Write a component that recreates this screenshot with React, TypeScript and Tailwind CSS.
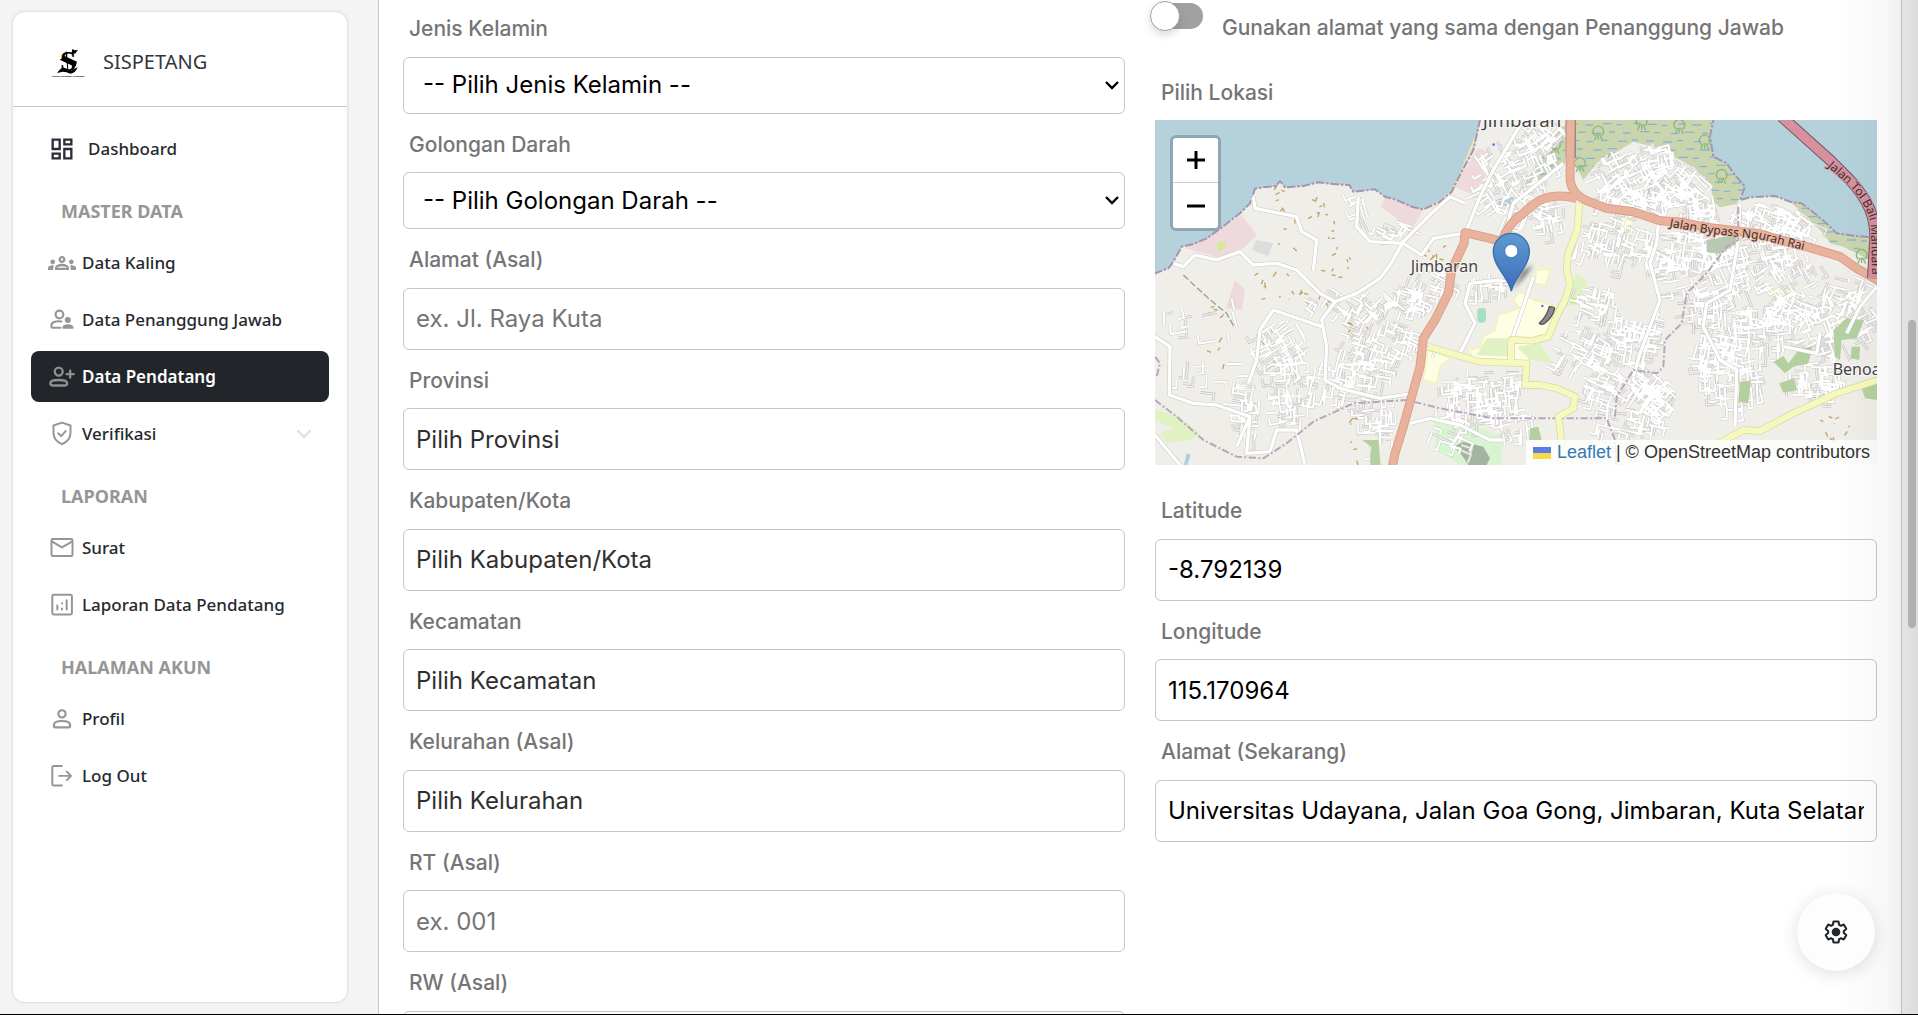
import React, { useId } from "react";

/* ---------- icons ---------- */

type IconProps = { children: React.ReactNode; className?: string; width?: number };

function LineIcon({ children, className = "text-[#969696]", width = 1.7 }: IconProps) {
  return (
    <svg
      viewBox="0 0 24 24"
      className={`size-7 shrink-0 ${className}`}
      fill="none"
      stroke="currentColor"
      strokeWidth={width}
      strokeLinecap="round"
      strokeLinejoin="round"
      aria-hidden="true"
    >
      {children}
    </svg>
  );
}

const DashboardIcon = () => (
  <svg viewBox="0 0 24 24" className="size-7 shrink-0 text-[#2b2d38]" fill="currentColor" aria-hidden="true">
    <path d="M19 5v2h-4V5h4M9 5v6H5V5h4m10 8v6h-4v-6h4M9 17v2H5v-2h4M21 3h-8v6h8V3zM11 3H3v10h8V3zm10 8h-8v10h8V11zm-10 4H3v6h8v-6z" />
  </svg>
);

const GroupsIcon = () => (
  <svg viewBox="0 0 24 24" className="size-7 shrink-0 text-[#969696]" fill="currentColor" aria-hidden="true">
    <path d="M4 13c1.1 0 2-.9 2-2s-.9-2-2-2-2 .9-2 2 .9 2 2 2zm1.13 1.1c-.37-.06-.74-.1-1.13-.1-.99 0-1.93.21-2.78.58A2.01 2.01 0 0 0 0 16.43V18h4.5v-1.61c0-.83.23-1.61.63-2.29zM20 13c1.1 0 2-.9 2-2s-.9-2-2-2-2 .9-2 2 .9 2 2 2zm4 3.43c0-.81-.48-1.53-1.22-1.85a6.95 6.95 0 0 0-2.78-.58c-.39 0-.76.04-1.13.1.4.68.63 1.46.63 2.29V18H24v-1.57zm-7.76-2.78A10.09 10.09 0 0 0 12 12.75c-1.63 0-3.07.39-4.24.9A2.99 2.99 0 0 0 6 16.39V18h12v-1.61c0-1.18-.68-2.26-1.76-2.74zM8.07 16c.09-.23.13-.39.91-.69.97-.38 1.99-.56 3.02-.56s2.05.18 3.02.56c.77.3.81.46.91.69H8.07zM12 8c.55 0 1 .45 1 1s-.45 1-1 1-1-.45-1-1 .45-1 1-1m0-2c-1.66 0-3 1.34-3 3s1.34 3 3 3 3-1.34 3-3-1.34-3-3-3z" />
  </svg>
);

const SupervisorIcon = () => (
  <LineIcon width={1.8}>
    <circle cx="9.8" cy="7.3" r="3.3" />
    <path d="M11.5 13.3c-5-.9-8.600 1-8.600 3v1.200c0 .9.500 1.200 1.200 1.200h6.500" />
    <circle cx="17" cy="12" r="2.6" fill="currentColor" stroke="none" />
    <path d="M12.4 19.5v-1.3c0-3.4 9.4-3.4 9.4 0v1.3z" fill="currentColor" stroke="none" />
  </LineIcon>
);

const PersonAddIcon = () => (
  <LineIcon width={2} className="text-[#8f8f8f]">
    <circle cx="9.2" cy="7.3" r="3.4" />
    <path d="M2 17.4c0-3.800 14.400-3.800 14.400 0 0 1.600-1 1.900-2.200 1.900H4.200C3 19.300 2 19 2 17.400zM19 6.500v6M16 9.500h6" />
  </LineIcon>
);

const ShieldIcon = () => (
  <LineIcon>
    <path d="M12 2.200l7.300 2.500v6c0 5-3 8.200-7.300 10-4.300-1.800-7.300-5-7.300-10v-6zM8.800 11.400l2.400 2.400 4-4.300" />
  </LineIcon>
);

const MailIcon = () => (
  <LineIcon>
    <rect x="3" y="4.3" width="18" height="14.6" rx="1.2" />
    <path d="M3.500 6.500l8.500 5 8.500-5" />
  </LineIcon>
);

const ChartIcon = () => (
  <LineIcon>
    <rect x="3.7" y="3.3" width="16.8" height="16.8" rx="1.2" />
    <path d="M8 12.500v3.300M12 15v.8M12 10.500v.2M16 8v7.800" />
  </LineIcon>
);

const PersonIcon = () => (
  <LineIcon width={1.9}>
    <circle cx="12" cy="7.6" r="3.1" />
    <path d="M5.100 17c0-4.400 13.800-4.400 13.800 0v.9c0 .9-.4 1.200-1.200 1.200H6.300c-.8 0-1.200-.3-1.200-1.200z" />
  </LineIcon>
);

const LogoutIcon = () => (
  <LineIcon>
    <path d="M11.800 3.500H5c-.9 0-1.300.4-1.300 1.300v14c0 .9.400 1.300 1.300 1.300h6.800M9.500 11.900h10M16.200 8.300l3.500 3.600-3.500 3.600" />
  </LineIcon>
);

const GearIcon = () => (
  <svg viewBox="0 0 24 24" className="size-7" fill="none" stroke="#22262b" strokeWidth="2" strokeLinejoin="round" aria-hidden="true">
    <g transform="translate(1.200 1.200) scale(.9)">
      <path d="M19.43 12.98c.04-.32.07-.64.07-.98 0-.34-.03-.66-.07-.98l2.11-1.65c.19-.15.24-.42.12-.64l-2-3.46a.5.5 0 0 0-.61-.22l-2.49 1c-.52-.4-1.08-.73-1.69-.98l-.38-2.65A.488.488 0 0 0 14 2h-4c-.25 0-.46.18-.49.42l-.38 2.65c-.61.25-1.17.59-1.69.98l-2.49-1a.566.566 0 0 0-.18-.03c-.17 0-.34.09-.43.25l-2 3.46c-.13.22-.07.49.12.64l2.11 1.65c-.04.32-.07.65-.07.98 0 .33.03.66.07.98l-2.11 1.65c-.19.15-.24.42-.12.64l2 3.46a.5.5 0 0 0 .61.22l2.49-1c.52.4 1.08.73 1.69.98l.38 2.65c.03.24.24.42.49.42h4c.25 0 .46-.18.49-.42l.38-2.65c.61-.25 1.17-.59 1.69-.98l2.49 1c.06.02.12.03.18.03.17 0 .34-.09.43-.25l2-3.46c.12-.22.07-.49-.12-.64l-2.11-1.65z" />
    </g>
    <circle cx="12" cy="12" r="3.7" fill="#22262b" stroke="none" />
  </svg>
);

const Logo = () => (
  <svg viewBox="0 0 114 105" className="h-[35px] w-[38px] shrink-0" aria-hidden="true">
    <text x="33" y="78" fontFamily="Liberation Serif, serif" fontWeight="700" fontSize="88">S</text>
    <path d="M70 12q10 6 18 2l-10 12-10-2zM32 44l16-10 36 16-4 14-14-4zM24 84q14-20 26-14l16 8 20-12q-6 18-22 20-12-6-22-6zM54 20l4 54h-3l-5-54z" />
    <text x="57" y="97" textAnchor="middle" fontFamily="Liberation Sans, sans-serif" fontWeight="700" fontSize="7">
      Sistem Pendataan Pendatang
    </text>
  </svg>
);

/* ---------- sidebar ---------- */

type Item = { label: string; icon: React.ReactNode; active?: boolean; expandable?: boolean };

const sections: { title: string; items: Item[] }[] = [
  {
    title: "MASTER DATA",
    items: [
      { label: "Data Kaling", icon: <GroupsIcon /> },
      { label: "Data Penanggung Jawab", icon: <SupervisorIcon /> },
      { label: "Data Pendatang", icon: <PersonAddIcon />, active: true },
      { label: "Verifikasi", icon: <ShieldIcon />, expandable: true },
    ],
  },
  {
    title: "LAPORAN",
    items: [
      { label: "Surat", icon: <MailIcon /> },
      { label: "Laporan Data Pendatang", icon: <ChartIcon /> },
    ],
  },
  {
    title: "HALAMAN AKUN",
    items: [
      { label: "Profil", icon: <PersonIcon /> },
      { label: "Log Out", icon: <LogoutIcon /> },
    ],
  },
];

function NavItem({ item }: { item: Item }) {
  const tone = item.active ? "bg-[#22262b] text-white font-semibold" : "text-[#26292e] font-medium";
  return (
    <a href="#" className={`flex h-[51px] items-center gap-[6px] rounded-lg px-[17px] text-[17px] ${tone}`}>
      {item.icon}
      <span className="flex-1 whitespace-nowrap">{item.label}</span>
      {item.expandable && (
        <svg viewBox="0 0 16 16" className="size-4" fill="none" stroke="#dde0e6" strokeWidth="2.4" strokeLinecap="round" aria-hidden="true">
          <path d="M2 5l6 6 6-6" />
        </svg>
      )}
    </a>
  );
}

function Sidebar() {
  return (
    <aside className="my-3 ml-[13px] mr-[31px] w-[334px] shrink-0 overflow-hidden rounded-xl bg-white font-['Noto_Sans','Open_Sans',sans-serif] shadow-[0_0_3px_rgba(0,0,0,0.2)]">
      <div className="flex h-[95px] items-center gap-4 border-b border-[#c6c7c8] px-[36px] pt-[6px]">
        <Logo />
        <span className="text-[20px] text-[#32363c]">SISPETANG</span>
      </div>
      <nav className="px-[18px] pt-4">
        <a href="#" className="flex h-[51px] items-center gap-3 rounded-lg px-[17px] text-[17px] font-medium text-[#26292e]">
          <DashboardIcon />
          Dashboard
        </a>
        {sections.map((s) => (
          <div key={s.title}>
            <h2 className="pt-[25px] pb-[13px] pl-[30px] text-[18px] leading-[25px] font-bold text-[#969696]">{s.title}</h2>
            <div className="flex flex-col gap-[6px]">
              {s.items.map((i) => (
                <NavItem key={i.label} item={i} />
              ))}
            </div>
          </div>
        ))}
      </nav>
    </aside>
  );
}

/* ---------- form fields ---------- */

const labelText = "text-[21px] leading-normal font-medium text-[#757575]";

function SelectField({ label, option }: { label: string; option: string }) {
  const id = useId();
  return (
    <div className="flex flex-col gap-3">
      <label htmlFor={id} className={`pl-[6px] ${labelText}`}>{label}</label>
      <div className="relative">
        <select id={id} className="h-[57px] w-full appearance-none rounded-md border border-[#c6c6c6] bg-white px-[19px] text-2xl text-black">
          <option>{option}</option>
        </select>
        <svg
          viewBox="0 0 14 14"
          className="pointer-events-none absolute top-[21px] right-[6px] size-[14px]"
          fill="none"
          stroke="#000000"
          strokeWidth="2.4"
          aria-hidden="true"
        >
          <path d="M1 4l6 6 6-6" />
        </svg>
      </div>
    </div>
  );
}

type TextFieldProps = { label: string; placeholder?: string; value?: string; dark?: boolean };

function TextField({ label, placeholder, value, dark }: TextFieldProps) {
  const id = useId();
  return (
    <div className="flex flex-col gap-3">
      <label htmlFor={id} className={`pl-[6px] ${labelText}`}>{label}</label>
      <input
        id={id}
        type="text"
        placeholder={placeholder}
        defaultValue={value}
        className={`h-[62px] w-full rounded-md border border-[#c6c6c6] bg-white px-3 text-2xl text-black ${dark ? "placeholder:text-[#303030]" : "placeholder:text-[#757575]"}`}
      />
    </div>
  );
}

/* ---------- map ---------- */

function makeRandom(seed: number) {
  let s = seed;
  return () => {
    s = (s * 16807) % 2147483647;
    return s / 2147483647;
  };
}

/* Each district: centre x, centre y, radius x, radius y, street angle, street count */
const districts: [number, number, number, number, number, number][] = [
  [440, 730, 80, 70, 60, 60],
  [460, 870, 70, 110, 85, 70],
  [620, 840, 130, 70, 10, 90],
  [720, 720, 130, 60, 20, 80],
  [700, 610, 60, 40, 40, 26],
  [800, 600, 70, 40, 20, 50],
  [330, 930, 30, 90, 95, 40],
  [1010, 900, 90, 80, 85, 90],
  [1020, 850, 130, 50, 0, 60],
  [1040, 550, 60, 30, 0, 36],
  [850, 540, 70, 50, 25, 30],
  [660, 330, 20, 50, 70, 12],
  [760, 390, 60, 30, 25, 22],
  [1070, 230, 60, 110, 60, 50],
  [1180, 180, 70, 90, 65, 80],
  [1220, 100, 50, 40, 45, 40],
  [1130, 310, 80, 50, 20, 34],
  [1230, 330, 50, 60, 80, 26],
  [1470, 220, 110, 70, 60, 110],
  [1600, 240, 80, 60, 40, 90],
  [1560, 160, 50, 30, 80, 36],
  [1470, 300, 110, 40, 15, 60],
  [1420, 420, 120, 70, 15, 80],
  [1640, 310, 90, 50, 80, 50],
  [1620, 440, 120, 50, 10, 90],
  [1700, 360, 40, 60, 85, 40],
  [1860, 350, 100, 40, 20, 80],
  [1960, 370, 60, 40, 30, 40],
  [1860, 450, 120, 50, 75, 60],
  [1960, 520, 100, 60, 60, 50],
  [1760, 510, 70, 110, 70, 90],
  [1500, 700, 80, 100, 100, 120],
  [1400, 600, 130, 50, 15, 70],
  [1340, 740, 100, 60, 25, 70],
  [1560, 900, 50, 70, 130, 80],
  [1510, 860, 60, 40, 130, 50],
  [1740, 740, 70, 70, 10, 80],
  [1860, 680, 110, 70, 0, 100],
  [1780, 840, 100, 90, 85, 90],
  [1960, 620, 90, 50, 25, 60],
  [2020, 840, 90, 50, 0, 80],
  [2050, 680, 80, 90, 70, 60],
  [2160, 640, 50, 70, 60, 40],
  [1450, 960, 110, 50, 10, 50],
  [1380, 860, 60, 50, 20, 40],
  [1120, 950, 70, 60, 80, 40],
  [720, 960, 60, 80, 90, 40],
  [180, 640, 110, 100, 80, 12],
  [200, 820, 110, 60, 0, 12],
  [560, 620, 120, 60, 30, 30],
  [930, 1000, 60, 50, 20, 20],
  [1700, 640, 60, 60, 85, 40],
  [2120, 570, 70, 50, 20, 30],
  [1600, 540, 70, 60, 80, 30],
];

function buildStreets() {
  const rnd = makeRandom(4711);
  let major = "";
  let minor = "";
  for (const [cx, cy, rx, ry, angle, count] of districts) {
    for (let i = 0; i < count; i++) {
      const t = rnd() * Math.PI * 2;
      const r = Math.sqrt(rnd());
      const x = cx + Math.cos(t) * r * rx;
      const y = cy + Math.sin(t) * r * ry;
      const a = ((angle + (rnd() > 0.5 ? 90 : 0) + (rnd() - 0.5) * 16) * Math.PI) / 180;
      const len = 14 + rnd() * 38;
      const dx = Math.cos(a) * len;
      const dy = Math.sin(a) * len;
      let d = `M${x.toFixed(0)} ${y.toFixed(0)}l${dx.toFixed(0)} ${dy.toFixed(0)}`;
      if (rnd() > 0.5) d += `l${(-dy * 0.5).toFixed(0)} ${(dx * 0.5).toFixed(0)}`;
      if (i % 3 === 0) minor += d;
      else major += d;
    }
  }
  return { major, minor };
}

function buildTracks() {
  const rnd = makeRandom(97);
  const spots = [[540, 330, 30, 40], [420, 290, 15, 40], [500, 400, 90, 60], [580, 490, 70, 60], [510, 590, 60, 30], [400, 560, 60, 50], [370, 720, 30, 80], [230, 740, 30, 120], [640, 1020, 15, 70], [650, 660, 30, 40], [880, 470, 30, 30], [2080, 990, 60, 40]];
  let d = "";
  for (const [cx, cy, rx, ry] of spots) {
    for (let i = 0; i < 9; i++) {
      const x = cx + (rnd() - 0.5) * 2 * rx;
      const y = cy + (rnd() - 0.5) * 2 * ry;
      d += `M${x.toFixed(0)} ${y.toFixed(0)}l${((rnd() - 0.5) * 26).toFixed(0)} ${((rnd() - 0.3) * 24).toFixed(0)}`;
    }
  }
  return d;
}

function buildMarsh() {
  let d = "";
  for (let row = 0; row < 17; row++) {
    for (let col = 0; col < 25; col++) {
      const x = 1150 + col * 46 + (row % 2) * 22 + ((row * 7 + col * 5) % 9);
      const y = 70 + row * 25 + ((col * 3) % 7);
      d += `M${x} ${y}h${18 + ((row + col) % 3) * 5}`;
    }
  }
  return d;
}

const streets = buildStreets();
const tracks = buildTracks();
const marsh = buildMarsh();

const westSea =
  "M0 0H1040L1020 60 1000 150 965 215 935 275 900 305 850 328 815 320 770 300 735 290 705 268 640 275 628 255 590 253 535 247 490 258 435 262 420 243 408 258 370 262 345 266 330 310 300 340 255 375 200 415 160 432 125 440 100 485 85 505 45 520 0 530Z";
const eastSea =
  "M1725 0L1720 60 1710 110 1720 170 1760 190 1785 225 1815 260 1800 300 1830 292 1905 288 1950 305 1985 310 2030 345 2065 375 2090 400 2150 408 2230 414V0Z";
const mangrove =
  "M1308 40H1722L1710 110 1720 170 1760 190 1815 260 1790 312 1740 322 1715 300 1715 260 1660 200 1590 165 1540 140 1480 125 1440 150 1400 165 1370 190 1350 215 1330 240 1308 200ZM1276 75L1255 90 1200 180 1155 250 1180 262 1230 230 1276 190ZM1950 305L1985 310 2030 345 2065 375 2090 400 2205 412V490L2170 470 2110 440 2070 430 2050 400 2000 350Z";

const mainRoads = [
  "M340 290L345 325 470 350 485 395 530 420 520 510",
  "M100 490L130 500 165 465 230 480 300 455 340 495 410 490 470 510 540 580 585 605 650 580 720 535 750 495 790 425 880 335 930 290 975 310",
  "M655 290L650 380 690 425 790 430",
  "M790 430L845 465 880 415 970 400",
  "M980 390L1020 290 1060 210 1150 60",
  "M45 710L90 740 88 885 160 910 230 915 330 950 320 1060 390 1055 410 990 470 990 495 1095",
  "M45 1005L120 1095",
  "M585 605L545 660 560 740 555 840 600 865 720 895 820 880",
  "M545 680L400 630 360 690 350 780 325 850",
  "M810 970L870 955 960 975 1050 1020 1090 1020",
  "M1080 540L990 550 975 610 1005 670 960 760",
  "M1180 530L1150 620 1115 720",
  "M1555 370L1550 430 1530 490 1560 600 1500 760 1480 830",
  "M1800 310L1795 420 1770 570 1700 610 1690 680 1740 780 1790 810 1785 980",
  "M1270 190L1120 310 1100 380",
  "M330 950L290 1040",
  "M2211 560L2160 620 2120 700",
  "M2040 700L2030 760 1930 740",
];

const trunkRoads = [
  "M1292 50L1290 230Q1290 280 1340 302L1400 325 1480 335 1560 362 1620 366 1700 382 1860 402 1940 425 2000 440 2100 470 2150 505 2230 550",
  "M1310 295C1230 275 1190 300 1150 340 1110 365 1095 400 1085 425L1050 415 975 398 972 430 935 510 925 580 885 660 850 715 840 800 815 890 790 980 765 1060 755 1110",
];

const tollRoad = ["M1925 50L2070 180 2130 240C2185 300 2205 350 2205 410L2198 535"];

const yellowRoads = [
  "M1318 310L1312 390 1285 460 1280 510 1290 550 1275 600 1245 660 1225 710 1180 722 1113 720V785",
  "M865 740L950 765 1020 785 1160 790 1155 855 1200 855 1250 865 1305 890 1300 925 1255 950 1262 1000 1265 1110",
  "M1700 1050L1810 990 1860 993 1960 940 2090 880 2230 835",
];

const boundaries = [
  "M45 900L110 950 190 1020 290 1070 370 1075 440 1030 520 965 640 910 800 900 900 925 1060 955 1400 955 1425 1020 1430 1100",
  "M1425 950L1430 890 1480 810 1550 820 1570 800 1575 720 1625 670 1640 580 1700 520 1760 440 1795 420V320",
  "M45 770L60 790 50 830",
];

function Strokes({ paths, color, width, dash }: { paths: string[]; color: string; width: number; dash?: string }) {
  return (
    <g fill="none" stroke={color} strokeWidth={width} strokeDasharray={dash} strokeLinejoin="round">
      {paths.map((p) => (
        <path key={p} d={p} />
      ))}
    </g>
  );
}

const trees = [[1375, 95], [1505, 65], [1618, 75], [1694, 122], [1745, 225], [1245, 135], [1320, 190], [1420, 175], [2165, 465]];

function MapDrawing() {
  return (
    <svg viewBox="45 60 2166 1035" preserveAspectRatio="xMidYMid slice" className="block size-full" aria-hidden="true">
      <defs>
        <clipPath id="marsh-area"><path d={mangrove} /></clipPath>
        <linearGradient id="pin" x1="0" y1="0" x2="0" y2="1">
          <stop offset="0" stopColor="#5f9ad0" />
          <stop offset="1" stopColor="#3b6cbd" />
        </linearGradient>
        <path id="bypass" d="M1588 380L1700 400 1860 418 2010 455" />
        <path id="toll" d="M2062 200L2120 250Q2180 310 2192 370L2198 580" />
        <filter id="soft"><feGaussianBlur stdDeviation="7" /></filter>
      </defs>
      <rect width="2300" height="1200" fill="#f0eee9" />

      <g fill="#eedadc">
        <path d="M1012 145L1060 160 1045 200 1015 290 945 262Z" />
        <path d="M735 290L850 328 820 380 790 402 770 355 722 322Z" />
        <path d="M135 445L255 378 305 345 350 405 310 445 240 474Z" />
        <path d="M285 540L315 570 305 630 258 625Z" />
        <path d="M1960 490L1990 480 1965 520Z" />
      </g>
      <g fill="#dcdcdc">
        <path d="M350 420L400 430 385 468 335 450Z" />
        <path d="M2035 700L2085 710 2080 780 2025 765Z" />
      </g>
      <g fill="#fdfee2" stroke="#f3f3b4" strokeWidth="4">
        <path d="M1140 575L1120 600 1140 625 1075 645 1065 690 1030 710 1020 745 985 750 1000 775 1160 790 1220 700 1250 620 1180 600Z" />
        <path d="M865 748L930 775 900 800 890 850 850 840Z" />
        <path d="M1442 352L1478 355 1470 422 1440 415Z" />
        <path d="M1190 510L1232 508 1215 555 1185 550Z" />
        <path d="M1880 570L1930 565 1970 550 1960 575 1900 590Z" />
      </g>
      <g fill="#e0f2c4">
        <path d="M45 930L110 945 180 1000 150 1020 80 1030 60 1000 100 985 45 960Z" />
        <path d="M1310 520L1345 545 1325 600 1290 620 1285 580Z" />
        <path d="M1040 715L1100 715 1105 770 1010 765Z" />
        <path d="M1130 740L1200 730 1240 790 1170 780Z" />
      </g>
      <path d="M870 945L1000 975 1085 1010V1095H960L885 1050 888 990Z" fill="#d6f5d0" />
      <path d="M230 430l25-8 2 20-22 14zM1290 590l25 5-5 20-20-5z" fill="#d5ea96" />
      <path d="M940 1040l30-15 60 15 20 35-10 20H985l-20-30z" fill="#8f9a8a" opacity=".7" />
      <path d="M1055 305l40-15 30 5-20 22-40 0zM140 1060l12 5-10 30h-10zM1080 300l40-10v20l-30 8zM1520 200l14 5-5 80h-8zM1565 310l16 5-4 30h-10z" fill="#abd0e0" />

      <path d={mangrove} fill="#cad5ae" />
      <g clipPath="url(#marsh-area)">
        <path d={marsh} stroke="#86b5dc" strokeWidth="4" />
      </g>
      <g fill="none" stroke="#8db680" strokeWidth="4">
        {trees.map(([x, y]) => (
          <path key={`${x}-${y}`} d={`M${x - 10} ${y + 12}a16 16 0 1 1 20 0M${x - 4} ${y + 8}l-8 18M${x + 4} ${y + 8}l8 18M${x} ${y + 8}v16`} />
        ))}
      </g>

      <path d={tracks} fill="none" stroke="#c0a468" strokeWidth="4" strokeDasharray="18 5" />
      <path d="M130 525L205 595 260 640 282 680" fill="none" stroke="#a09a92" strokeWidth="4" strokeDasharray="20 8" />

      <path d={streets.minor} fill="none" stroke="#c4c3c1" strokeWidth="8" />
      <path d={streets.minor} fill="none" stroke="#f1f0ee" strokeWidth="4" />
      <path d={streets.major} fill="none" stroke="#c9c8c6" strokeWidth="9" />
      <path d={streets.major} fill="none" stroke="#ffffff" strokeWidth="6" />

      <g fill="#b5d0a0">
        <path d="M2080 690L2120 655 2172 660 2150 715 2105 720 2100 780 2085 770Z" />
        <path d="M2135 740L2160 740 2158 780 2132 775Z" />
        <path d="M1900 785L1930 768 1945 790 1980 745 2018 740 2005 790 1960 800 1935 820Z" />
        <path d="M1918 850L1960 835 1972 870 1930 878Z" />
        <path d="M1800 845L1832 842 1825 910 1795 905Z" />
        <path d="M2165 865L2211 845V900L2175 895Z" />
        <path d="M667 1020L715 1020 722 1095 690 1095 693 1040Z" />
        <path d="M1170 985L1195 980 1205 1020 1168 1020Z" />
        <path d="M1700 420L1790 405 1790 430 1740 462 1700 455Z" fill="#b9c8b0" />
      </g>
      <rect x="1012" y="624" width="26" height="44" rx="10" fill="#a5dfc4" />
      <path d="M1430 540l110-10 10 70-20 70-80-10-30-60z" fill="#efede8" />

      <path d={westSea} fill="#b5d1dc" />
      <path d={eastSea} fill="#b5d1dc" />
      <path d="M1012 100L965 215 935 275 900 305 850 328" fill="none" stroke="#f3e6b2" strokeWidth="7" />
      <Strokes paths={[westSea, eastSea]} color="#a694b2" width={6} dash="26 5 8 5" />

      <Strokes paths={mainRoads} color="#c9c8c6" width={13} />
      <Strokes paths={mainRoads} color="#ffffff" width={10} />
      <Strokes paths={boundaries} color="#b8a6bd" width={6} dash="22 7 6 7" />

      <Strokes paths={yellowRoads} color="#d5d6a0" width={22} />
      <Strokes paths={yellowRoads} color="#f6f9bf" width={18} />
      <path d="M1279 50V175M1305 50V175" stroke="#5d5a52" strokeWidth="4" />
      <Strokes paths={trunkRoads} color="#d99b83" width={27} />
      <Strokes paths={trunkRoads} color="#e8b29d" width={22} />
      <Strokes paths={tollRoad} color="#6c5960" width={34} />
      <Strokes paths={tollRoad} color="#d8909f" width={28} />

      <path d="M1228 620q16 0 16 6-6 26-30 44-10 6-16 0 22-20 30-50z" fill="#8b8b8b" stroke="#55525e" strokeWidth="4" />
      <circle cx="1061" cy="134" r="4" fill="#7a6ef0" />
      <circle cx="1207" cy="618" r="4" fill="#7a6ef0" />

      <g fontFamily="Noto Sans, sans-serif" fill="#444444" stroke="#ffffff" strokeOpacity=".8" strokeWidth="5" paintOrder="stroke" strokeLinejoin="round">
        <text x="1028" y="82" fontSize="56">Jimbaran</text>
        <text x="812" y="517" fontSize="48">Jimbaran</text>
        <text x="2078" y="824" fontSize="48">Benoa</text>
      </g>
      <g fontFamily="Noto Sans, sans-serif" fontSize="36" fill="#3e2f2c" stroke="#e8b29d" strokeWidth="5" paintOrder="stroke">
        <text><textPath href="#bypass">Jalan Bypass Ngurah Rai</textPath></text>
        <text stroke="#d8909f"><textPath href="#toll">Jalan Tol Bali Mandara</textPath></text>
      </g>

      <path d="M1114 572L1150 510 1180 495 1155 530Z" fill="#000000" opacity=".5" filter="url(#soft)" />
      <path d="M1114 573C1104 530 1060 500 1060 454a54 54 0 0 1 108 0c0 46-44 76-54 119z" fill="url(#pin)" stroke="#3a6da8" strokeWidth="4" />
      <circle cx="1114" cy="453" r="20" fill="#ffffff" stroke="#3f74b0" strokeWidth="3" />
    </svg>
  );
}

function LocationMap() {
  return (
    <div className="relative h-[345px] overflow-hidden">
      <MapDrawing />
      <div className="absolute top-[15px] left-[15px] flex flex-col rounded-md border-[3px] border-[#8fa7b0] bg-white">
        <button type="button" aria-label="Zoom in" className="flex h-[45px] w-[45px] items-center justify-center rounded-t-sm border-b border-[#cccccc] bg-white">
          <svg viewBox="0 0 18 18" className="size-[18px]" stroke="#000000" strokeWidth="3" aria-hidden="true"><path d="M0 9h18M9 0v18" /></svg>
        </button>
        <button type="button" aria-label="Zoom out" className="flex h-[45px] w-[45px] items-center justify-center rounded-b-sm bg-white">
          <svg viewBox="0 0 18 18" className="size-[18px]" stroke="#000000" strokeWidth="3" aria-hidden="true"><path d="M0 9h18" /></svg>
        </button>
      </div>
      <div className="absolute right-0 bottom-0 flex h-[25px] items-center gap-[6px] bg-white/80 px-[7px] font-['Liberation_Sans',sans-serif] text-[18px] whitespace-nowrap text-[#333333]">
        <svg viewBox="0 0 18 12" className="h-3 w-[18px]" aria-hidden="true">
          <path fill="#5b7ce0" d="M0 0h18v6H0z" />
          <path fill="#f8d94a" d="M0 6h18v6H0z" />
        </svg>
        <span>
          <a href="#" className="text-[#3579b1]">Leaflet</a> | © OpenStreetMap contributors
        </span>
      </div>
    </div>
  );
}

/* ---------- page ---------- */

export default function App() {
  return (
    <div className="relative flex h-screen overflow-hidden border-b border-black bg-[#f4f4f4] font-['Inter',sans-serif]">
      <Sidebar />
      <main className="mr-4 min-w-0 flex-1 overflow-hidden border-x border-[#c8c8c8] bg-white px-6">
        <form className="grid grid-cols-2 gap-[30px]">
          <div className="flex flex-col gap-[15px] pt-[13px]">
            <SelectField label="Jenis Kelamin" option="-- Pilih Jenis Kelamin --" />
            <SelectField label="Golongan Darah" option="-- Pilih Golongan Darah --" />
            <TextField label="Alamat (Asal)" placeholder="ex. Jl. Raya Kuta" />
            <TextField label="Provinsi" placeholder="Pilih Provinsi" dark />
            <TextField label="Kabupaten/Kota" placeholder="Pilih Kabupaten/Kota" dark />
            <TextField label="Kecamatan" placeholder="Pilih Kecamatan" dark />
            <TextField label="Kelurahan (Asal)" placeholder="Pilih Kelurahan" dark />
            <TextField label="RT (Asal)" placeholder="ex. 001" />
            <TextField label="RW (Asal)" placeholder="ex. 001" />
          </div>
          <div className="flex flex-col pt-[3px]">
            <div className="flex items-start gap-[19px]">
              <input
                id="same-address"
                type="checkbox"
                className="relative h-[26px] w-12 shrink-0 appearance-none rounded-full bg-[#a1a1a1] before:absolute before:top-1/2 before:-left-[5px] before:size-[30px] before:-translate-y-1/2 before:rounded-full before:border before:border-[#a1a1a1] before:bg-white before:shadow-[0_4px_8px_rgba(0,0,0,0.15)] checked:bg-[#22262b] checked:before:left-6"
              />
              <label htmlFor="same-address" className={`mt-[9px] ${labelText}`}>
                Gunakan alamat yang sama dengan Penanggung Jawab
              </label>
            </div>
            <p className={`mt-[33px] mb-3 pl-[6px] ${labelText}`}>Pilih Lokasi</p>
            <LocationMap />
            <div className="mt-[30px] flex flex-col gap-[15px]">
              <TextField label="Latitude" value="-8.792139" />
              <TextField label="Longitude" value="115.170964" />
              <TextField label="Alamat (Sekarang)" value="Universitas Udayana, Jalan Goa Gong, Jimbaran, Kuta Selatan, Badung, Bali" />
            </div>
          </div>
        </form>
      </main>

      <div className="pointer-events-none absolute inset-y-0 right-0 w-20 bg-linear-to-r from-transparent via-black/3 via-60% to-black/10" />
      <div className="absolute top-[320px] right-[2px] h-[308px] w-2 rounded-full bg-[#b0b0b0]" />
      <button
        type="button"
        aria-label="Pengaturan"
        className="absolute right-[43px] bottom-[43px] flex size-[78px] items-center justify-center rounded-full bg-[#fdfdfd] shadow-[0_3px_18px_rgba(0,0,0,0.13)]"
      >
        <GearIcon />
      </button>
    </div>
  );
}
